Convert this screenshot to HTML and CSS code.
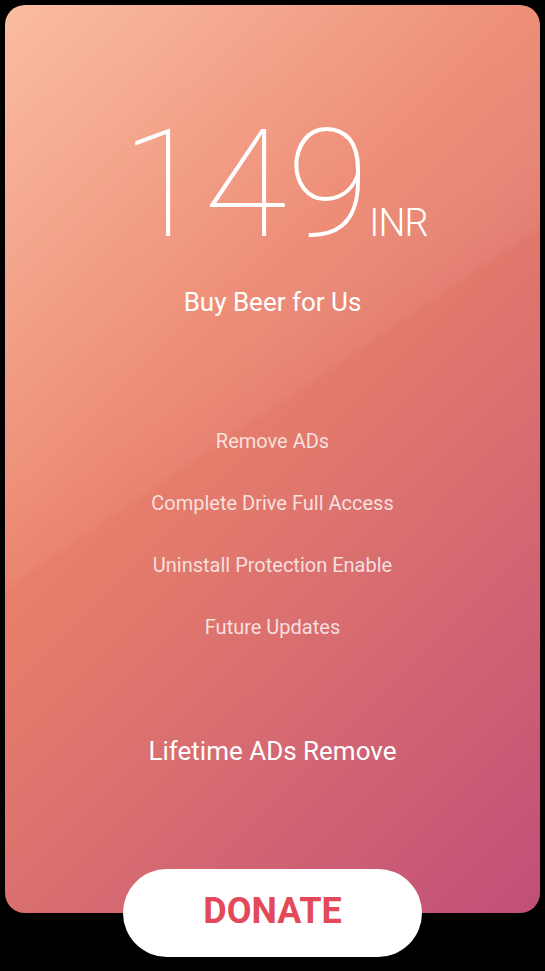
FILE: index.html
```html
<!DOCTYPE html>
<html lang="en">
<head>
<meta charset="utf-8">
<title>Buy Beer for Us</title>
<link rel="stylesheet" href="styles.css">
</head>
<body>
<main class="screen">
  <section class="card">
    <div class="price">
      <span class="amount">149</span><span class="currency">INR</span>
    </div>
    <h1 class="title">Buy Beer for Us</h1>
    <ul class="features">
      <li>Remove ADs</li>
      <li>Complete Drive Full Access</li>
      <li>Uninstall Protection Enable</li>
      <li>Future Updates</li>
    </ul>
    <p class="lifetime">Lifetime ADs Remove</p>
  </section>
  <button class="donate" type="button">DONATE</button>
</main>
</body>
</html>
```
FILE: styles.css
```css
* { box-sizing: border-box; }
html, body { margin: 0; padding: 0; background: #000; }
body { font-family: Roboto, "Noto Sans", "Liberation Sans", sans-serif; width: 545px; height: 971px; overflow: hidden; }
.screen { display: flex; flex-direction: column; align-items: center; padding-top: 5px; }
.card {
  width: 535px; height: 908px; border-radius: 20px;
  background:
    linear-gradient(146deg, rgba(255,255,255,0.14) 0%, rgba(255,255,255,0.09) 40%, rgba(255,255,255,0.05) 45.5%, rgba(255,255,255,0) 46.5%),
    linear-gradient(135deg, #fab292 0%, #eb8169 37%, #e1786c 52%, #da6f70 63%, #c04f78 100%);
  display: flex; flex-direction: column; align-items: center;
  padding-top: 104px; color: #fff;
}
.price { display: flex; align-items: baseline; height: 152px; padding-left: 4px; }
.amount { font-size: 151px; font-weight: 100; line-height: 152px; }
.currency { font-size: 38px; font-weight: 300; line-height: 38px; margin-left: 0; letter-spacing: -1px; }
.title { margin: 25px 0 0; font-size: 26px; font-weight: 400; line-height: 32px; }
.features { list-style: none; margin: 92px 0 0; padding: 0; text-align: center; }
.features li { font-size: 20px; line-height: 62px; color: rgba(255,255,255,0.78); }
.lifetime { margin: 77px 0 0; font-size: 26px; font-weight: 400; line-height: 32px; }
.donate {
  margin-top: -44px; width: 299px; height: 88px; border: 0; border-radius: 44px;
  background: #fff; color: #e24a5a; font-family: Roboto, "Noto Sans", sans-serif;
  font-size: 36px; font-weight: 700; padding: 0 0 4px; cursor: pointer;
}
```
